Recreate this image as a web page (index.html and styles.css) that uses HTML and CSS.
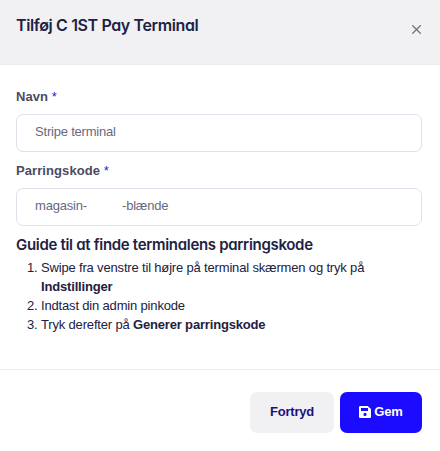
FILE: index.html
```
<!DOCTYPE html>
<html lang="da">
<head>
    <meta charset="UTF-8">
    <meta name="viewport" content="width=device-width, initial-scale=1.0">
    <title>Tilføj C 1ST Pay Terminal</title>
    <link rel="stylesheet" href="styles.css">
</head>
<body>
    <form class="modal">
        <header class="modal-header">
            <h1 class="modal-title">Tilføj C 1ST Pay Terminal</h1>
            <button type="button" class="close" aria-label="Luk">
                <svg width="9" height="9" viewBox="0 0 9 9">
                    <path d="M.3.3l8.4 8.4M8.7.3L.3 8.7" fill="none" stroke="#737375" stroke-width="1.3"/>
                </svg>
            </button>
        </header>

        <div class="modal-body">
            <label class="label" for="name">Navn <span class="required">*</span></label>
            <input class="input" type="text" id="name" value="Stripe terminal">

            <label class="label" for="code">Parringskode <span class="required">*</span></label>
            <div class="input code" id="code"><span class="code-start">magasin-</span><span>-blænde</span></div>

            <h2 class="guide-title">Guide til at finde terminalens parringskode</h2>
            <ol class="guide">
                <li>Swipe fra venstre til højre på terminal skærmen og tryk på <strong>Indstillinger</strong></li>
                <li>Indtast din admin pinkode</li>
                <li>Tryk derefter på <strong>Generer parringskode</strong></li>
            </ol>
        </div>

        <footer class="modal-footer">
            <button type="button" class="btn btn-cancel">Fortryd</button>
            <button type="button" class="btn btn-save">
                <svg class="icon" width="12" height="12" viewBox="0 0 12 12">
                    <path fill="#fff" fill-rule="evenodd" d="M1.3 0h7.4L12 3.1v7.6c0 .7-.6 1.3-1.3 1.3H1.3C.6 12 0 11.4 0 10.7V1.3C0 .6.6 0 1.3 0zM2 2v3h7V2zM6 6.8a1.6 1.6 0 1 0 0 3.2 1.6 1.6 0 0 0 0-3.2z"/>
                </svg>
                <span>Gem</span>
            </button>
        </footer>
    </form>
</body>
</html>
```
FILE: styles.css
```
* {
    box-sizing: border-box;
}

body {
    margin: 0;
    background: #fff;
    color: #212141;
    font-family: "Liberation Sans", Arial, sans-serif;
    font-size: 13px;
}

.modal {
    display: flex;
    flex-direction: column;
    height: 451px;
}

.modal-header {
    display: flex;
    justify-content: space-between;
    align-items: flex-start;
    height: 65px;
    padding: 15px 19px 0 16px;
    background: #f1f1f4;
    border-bottom: 1px solid #ededf0;
}

.modal-title,
.guide-title {
    margin: 0;
    font-family: Inter, sans-serif;
    font-feature-settings: "cv11";
    font-weight: 600;
    line-height: 20px;
    white-space: nowrap;
}

.modal-title {
    font-size: 16px;
    letter-spacing: -0.38px;
}

.close {
    display: flex;
    margin-top: 10px;
    padding: 0;
    border: none;
    background: none;
    cursor: pointer;
}

.modal-body {
    flex: 1;
    padding: 22px 18px 0 16px;
}

.label {
    display: block;
    height: 27px;
    color: #4b4b62;
    font-weight: bold;
    line-height: 20px;
    letter-spacing: 0.08px;
}

.required {
    color: #2a1fc4;
    font-weight: normal;
}

.input {
    display: block;
    width: 100%;
    height: 38px;
    margin-bottom: 9px;
    padding: 0 18px 3px;
    border: 1px solid #e0e0ea;
    border-radius: 7px;
    background: #fff;
    color: #68687f;
    font: inherit;
    letter-spacing: -0.2px;
}

.code {
    display: flex;
    align-items: center;
}

.code-start {
    width: 87px;
}

.guide-title {
    font-size: 15px;
    letter-spacing: -0.31px;
}

.guide {
    margin: 3px 0 0;
    padding-left: 25px;
    line-height: 19px;
    letter-spacing: -0.17px;
}

.modal-footer {
    display: flex;
    justify-content: flex-end;
    gap: 6px;
    height: 82px;
    padding: 22px 18px 0;
    border-top: 1px solid #ececee;
}

.btn {
    display: flex;
    justify-content: center;
    align-items: center;
    height: 41px;
    padding: 0 0 2px;
    border: none;
    border-radius: 7px;
    font: bold 13px "Liberation Sans", Arial, sans-serif;
    letter-spacing: -0.2px;
    cursor: pointer;
}

.btn-cancel {
    width: 84px;
    background: #f1f1f4;
    color: #1b1080;
}

.btn-save {
    gap: 3px;
    width: 82px;
    background: #1b0cff;
    color: #fff;
}
```
